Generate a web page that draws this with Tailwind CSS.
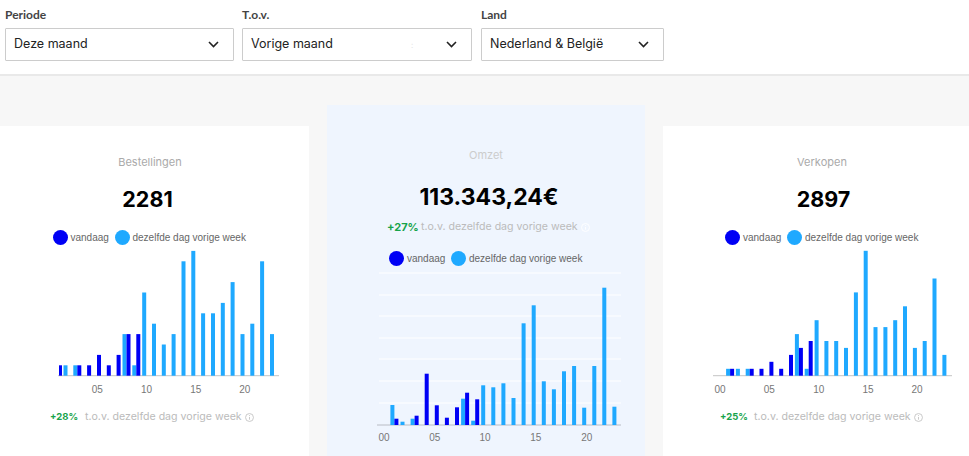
<!DOCTYPE html>
<html lang="nl">
<head>
<meta charset="utf-8">
<script src="https://cdn.jsdelivr.net/npm/@tailwindcss/browser@4"></script>
<title>Dashboard</title>
</head>
<body class="w-[969px] h-[456px] overflow-hidden bg-[#f7f7f7] font-['Inter',sans-serif]">
<header class="h-[76px] bg-white border-b-2 border-[#e9e9e9] flex gap-2 pl-[5px] pt-[8px]">
  <div class="w-[229px]">
    <div class="h-[14px] leading-[14px] mb-[6px] text-[12px] font-bold text-[#444] font-['Lato',sans-serif]">Periode</div>
    <div class="h-[33px] border border-[#ccc] rounded-[1px] flex items-center justify-between pl-[8px] pr-[14px] text-[12.5px] text-[#222]">
      <span>Deze maand</span>
      <svg class="w-[11px] h-[7px]" viewBox="0 0 11 7" fill="none" stroke="#222" stroke-width="1.6"><path d="M1 1l4.5 4.5L10 1"/></svg>
    </div>
  </div>
  <div class="w-[230px]">
    <div class="h-[14px] leading-[14px] mb-[6px] text-[12px] font-bold text-[#444] font-['Lato',sans-serif]">T.o.v.</div>
    <div class="h-[33px] border border-[#ccc] rounded-[1px] flex items-center pl-[8px] pr-[14px] text-[12.5px] text-[#222]">
      <span>Vorige maand</span>
      <span class="ml-[78px] text-[8px] text-[#e4e4e4]">:</span>
      <svg class="ml-auto w-[11px] h-[7px]" viewBox="0 0 11 7" fill="none" stroke="#222" stroke-width="1.6"><path d="M1 1l4.5 4.5L10 1"/></svg>
    </div>
  </div>
  <div class="w-[183px] ml-px">
    <div class="h-[14px] leading-[14px] mb-[6px] text-[12px] font-bold text-[#444] font-['Lato',sans-serif]">Land</div>
    <div class="h-[33px] border border-[#ccc] rounded-[1px] flex items-center justify-between pl-[8px] pr-[14px] text-[12.5px] text-[#222]">
      <span>Nederland &amp; België</span>
      <svg class="w-[11px] h-[7px]" viewBox="0 0 11 7" fill="none" stroke="#222" stroke-width="1.6"><path d="M1 1l4.5 4.5L10 1"/></svg>
    </div>
  </div>
</header>

<main class="flex gap-[18px] -ml-[9px] w-[990px] h-[380px] overflow-hidden items-start pt-[29px]">
  <!-- Bestellingen -->
  <section class="w-[318px] h-[330px] mt-[21px] bg-white shrink-0 flex flex-col items-center">
    <div class="mt-[29px] h-[14px] leading-[14px] text-[11px] text-[#aaa]">Bestellingen</div>
    <div class="mt-[16px] -ml-[5px] h-[28px] leading-[28px] text-[21.5px] font-bold text-black">2281</div>
    <div class="mt-[16px] h-[16px] w-full pl-[61.5px] flex items-center text-[10px] text-[#666] font-['Liberation_Sans',sans-serif]">
      <span class="w-[15px] h-[15px] rounded-full bg-[#0000f5]"></span><span class="ml-[3px] w-[44px]">vandaag</span>
      <span class="w-[15px] h-[15px] rounded-full bg-[#1fa9ff]"></span><span class="ml-[3px]">dezelfde dag vorige week</span>
    </div>
    <svg class="block mt-px w-[318px] h-[150px]" viewBox="-9 246 318 150">
      <line x1="58" x2="279" y1="375.7" y2="375.7" stroke="#c4c4c4" stroke-width="1"/>
      <g transform="translate(0 375.7) scale(1 -1)" fill="#1fa9ff">
        <rect x="63.5" y="0" width="4" height="10.4"/><rect x="73.3" y="0" width="4" height="10.4"/>
        <rect x="122.5" y="0" width="4" height="41.6"/><rect x="132.3" y="0" width="4" height="10.4"/>
        <rect x="142.2" y="0" width="4" height="83.2"/><rect x="152" y="0" width="4" height="52"/>
        <rect x="161.8" y="0" width="4" height="31.2"/><rect x="171.6" y="0" width="4" height="41.6"/>
        <rect x="181.5" y="0" width="4" height="114.4"/><rect x="191.3" y="0" width="4" height="124.8"/>
        <rect x="201.1" y="0" width="4" height="62.4"/><rect x="211" y="0" width="4" height="62.4"/>
        <rect x="220.8" y="0" width="4" height="72.8"/><rect x="230.6" y="0" width="4" height="93.6"/>
        <rect x="240.5" y="0" width="4" height="41.6"/><rect x="250.3" y="0" width="4" height="52"/>
        <rect x="260.1" y="0" width="4" height="114.4"/><rect x="270" y="0" width="4" height="41.6"/>
      </g>
      <g transform="translate(0 375.7) scale(1 -1)" fill="#0000f5">
        <rect x="59" y="0" width="3" height="10.4"/><rect x="77.3" y="0" width="4" height="10.4"/>
        <rect x="87.1" y="0" width="4" height="10.4"/><rect x="97" y="0" width="4" height="20.8"/>
        <rect x="106.8" y="0" width="4" height="10.4"/><rect x="116.6" y="0" width="4" height="20.8"/>
        <rect x="126.5" y="0" width="4" height="41.6"/><rect x="136.3" y="0" width="4" height="41.6"/>
      </g>
      <g font-family="Liberation Sans" font-size="10" fill="#777" text-anchor="middle">
        <text x="97.3" y="393">05</text><text x="146.5" y="393">10</text><text x="195.8" y="393">15</text><text x="244.8" y="393">20</text>
      </g>
    </svg>
    <div class="mt-[14px] h-[14px] w-full pl-[59px] flex items-center">
      <span class="text-[9.5px] font-bold text-[#16a34a] w-[35px]">+28%</span>
      <span class="text-[10.6px] text-[#bbb] whitespace-nowrap">t.o.v. dezelfde dag vorige week</span>
      <svg class="ml-[3px] w-[9px] h-[9px]" viewBox="0 0 10 10" fill="none" stroke="#c4c4c4"><circle cx="5" cy="5" r="4.4"/><path d="M5 4.4v3M5 2.4v1"/></svg>
    </div>
  </section>

  <!-- Omzet -->
  <section class="w-[318px] h-[351px] bg-[#eff5fe] shrink-0 flex flex-col items-center">
    <div class="mt-[43px] h-[14px] leading-[14px] text-[11px] text-[#ccc]">Omzet</div>
    <div class="mt-[19px] ml-[6px] h-[32px] leading-[32px] text-[23px] font-bold text-black">113.343,24€</div>
    <div class="mt-[7px] h-[14px] w-full pl-[60px] flex items-center">
      <span class="text-[11px] font-bold text-[#16a34a] w-[34px]">+27%</span>
      <span class="text-[10.6px] text-[#bbb] whitespace-nowrap">t.o.v. dezelfde dag vorige week</span>
      <svg class="ml-[3px] w-[9px] h-[9px]" viewBox="0 0 10 10" fill="none" stroke="#fff"><circle cx="5" cy="5" r="4.4"/><path d="M5 4.4v3M5 2.4v1"/></svg>
    </div>
    <div class="mt-[16px] h-[16px] w-full pl-[62px] flex items-center text-[10px] text-[#666] font-['Liberation_Sans',sans-serif]">
      <span class="w-[15px] h-[15px] rounded-full bg-[#0000f5]"></span><span class="ml-[3px] w-[44px]">vandaag</span>
      <span class="w-[15px] h-[15px] rounded-full bg-[#1fa9ff]"></span><span class="ml-[3px]">dezelfde dag vorige week</span>
    </div>
    <svg class="block mt-px w-[318px] h-[189px]" viewBox="327 267 318 189">
      <g stroke="#fff" stroke-width="1">
        <line x1="379" x2="621" y1="273" y2="273"/><line x1="379" x2="621" y1="295" y2="295"/>
        <line x1="379" x2="621" y1="316" y2="316"/><line x1="379" x2="621" y1="338" y2="338"/>
        <line x1="379" x2="621" y1="359" y2="359"/><line x1="379" x2="621" y1="381" y2="381"/>
        <line x1="379" x2="621" y1="403" y2="403"/>
      </g>
      <line x1="377" x2="621" y1="425" y2="425" stroke="#b9bcc4" stroke-width="1"/>
      <g transform="translate(0 425) scale(1 -1)" fill="#1fa9ff">
        <rect x="390.4" y="0" width="4" height="20"/><rect x="400.5" y="0" width="4" height="3.3"/>
        <rect x="410.6" y="0" width="4" height="6.3"/><rect x="461.1" y="0" width="4" height="26.3"/>
        <rect x="471.2" y="0" width="4" height="4.3"/><rect x="481.2" y="0" width="4" height="39.7"/>
        <rect x="491.3" y="0" width="4" height="37.7"/><rect x="501.4" y="0" width="4" height="41.7"/>
        <rect x="511.5" y="0" width="4" height="27"/><rect x="521.6" y="0" width="4" height="101.7"/>
        <rect x="531.7" y="0" width="4" height="119.7"/><rect x="541.8" y="0" width="4" height="43.7"/>
        <rect x="551.9" y="0" width="4" height="35.7"/><rect x="562" y="0" width="4" height="53.7"/>
        <rect x="572.1" y="0" width="4" height="59"/><rect x="582.2" y="0" width="4" height="17.3"/>
        <rect x="592.3" y="0" width="4" height="59"/><rect x="602.3" y="0" width="4" height="137.3"/>
        <rect x="612.4" y="0" width="4" height="18.3"/>
      </g>
      <g transform="translate(0 425) scale(1 -1)" fill="#0000f5">
        <rect x="394.4" y="0" width="4" height="6.3"/><rect x="414.6" y="0" width="4" height="9.3"/>
        <rect x="424.7" y="0" width="4" height="51.3"/><rect x="434.8" y="0" width="4" height="19.7"/>
        <rect x="444.9" y="0" width="4" height="7.3"/><rect x="455" y="0" width="4" height="17.7"/>
        <rect x="465.1" y="0" width="4" height="32.3"/><rect x="475.2" y="0" width="4" height="25.7"/>
      </g>
      <g font-family="Liberation Sans" font-size="10" fill="#777" text-anchor="middle">
        <text x="384" y="440.5">00</text><text x="434.7" y="440.5">05</text><text x="485" y="440.5">10</text><text x="535.7" y="440.5">15</text><text x="586.7" y="440.5">20</text>
      </g>
    </svg>
  </section>

  <!-- Verkopen -->
  <section class="w-[318px] h-[330px] mt-[21px] bg-white shrink-0 flex flex-col">
    <div class="mt-[29px] w-[318px] text-center h-[14px] leading-[14px] text-[11px] text-[#aaa]">Verkopen</div>
    <div class="mt-[16px] w-[321px] text-center h-[28px] leading-[28px] text-[21.5px] font-bold text-black">2897</div>
    <div class="mt-[16px] h-[16px] w-full pl-[62px] flex items-center text-[10px] text-[#666] font-['Liberation_Sans',sans-serif]">
      <span class="w-[15px] h-[15px] rounded-full bg-[#0000f5]"></span><span class="ml-[3px] w-[44px]">vandaag</span>
      <span class="w-[15px] h-[15px] rounded-full bg-[#1fa9ff]"></span><span class="ml-[3px]">dezelfde dag vorige week</span>
    </div>
    <svg class="block mt-px w-[318px] h-[150px]" viewBox="663 246 318 150">
      <line x1="713" x2="952" y1="375.7" y2="375.7" stroke="#c4c4c4" stroke-width="1"/>
      <g transform="translate(0 375.7) scale(1 -1)" fill="#1fa9ff">
        <rect x="726.1" y="0" width="4" height="6.9"/><rect x="735.9" y="0" width="4" height="6.9"/>
        <rect x="745.7" y="0" width="4" height="6.9"/><rect x="794.9" y="0" width="4" height="41.6"/>
        <rect x="804.7" y="0" width="4" height="6.9"/><rect x="814.6" y="0" width="4" height="55.5"/>
        <rect x="824.4" y="0" width="4" height="34.7"/><rect x="834.2" y="0" width="4" height="34.7"/>
        <rect x="844" y="0" width="4" height="27.8"/><rect x="853.9" y="0" width="4" height="83.3"/>
        <rect x="863.7" y="0" width="4" height="124.9"/><rect x="873.5" y="0" width="4" height="48.6"/>
        <rect x="883.4" y="0" width="4" height="48.6"/><rect x="893.2" y="0" width="4" height="55.5"/>
        <rect x="903" y="0" width="4" height="69.4"/><rect x="912.9" y="0" width="4" height="27.8"/>
        <rect x="922.7" y="0" width="4" height="34.7"/><rect x="932.5" y="0" width="4" height="97.2"/>
        <rect x="942.4" y="0" width="4" height="20.8"/>
      </g>
      <g transform="translate(0 375.7) scale(1 -1)" fill="#0000f5">
        <rect x="730.1" y="0" width="4" height="6.9"/><rect x="749.7" y="0" width="4" height="6.9"/>
        <rect x="759.5" y="0" width="4" height="6.9"/><rect x="769.4" y="0" width="4" height="13.9"/>
        <rect x="779.2" y="0" width="4" height="6.9"/><rect x="789" y="0" width="4" height="20.8"/>
        <rect x="798.9" y="0" width="4" height="27.8"/><rect x="808.7" y="0" width="4" height="34.7"/>
      </g>
      <g font-family="Liberation Sans" font-size="10" fill="#777" text-anchor="middle">
        <text x="720" y="393">00</text><text x="769.3" y="393">05</text><text x="818.7" y="393">10</text><text x="868" y="393">15</text><text x="917" y="393">20</text>
      </g>
    </svg>
    <div class="mt-[14px] h-[14px] w-full pl-[57px] flex items-center">
      <span class="text-[9.5px] font-bold text-[#16a34a] w-[34px]">+25%</span>
      <span class="text-[10.6px] text-[#bbb] whitespace-nowrap">t.o.v. dezelfde dag vorige week</span>
      <svg class="ml-[3px] w-[9px] h-[9px]" viewBox="0 0 10 10" fill="none" stroke="#c4c4c4"><circle cx="5" cy="5" r="4.4"/><path d="M5 4.4v3M5 2.4v1"/></svg>
    </div>
  </section>
</main>
</body>
</html>
